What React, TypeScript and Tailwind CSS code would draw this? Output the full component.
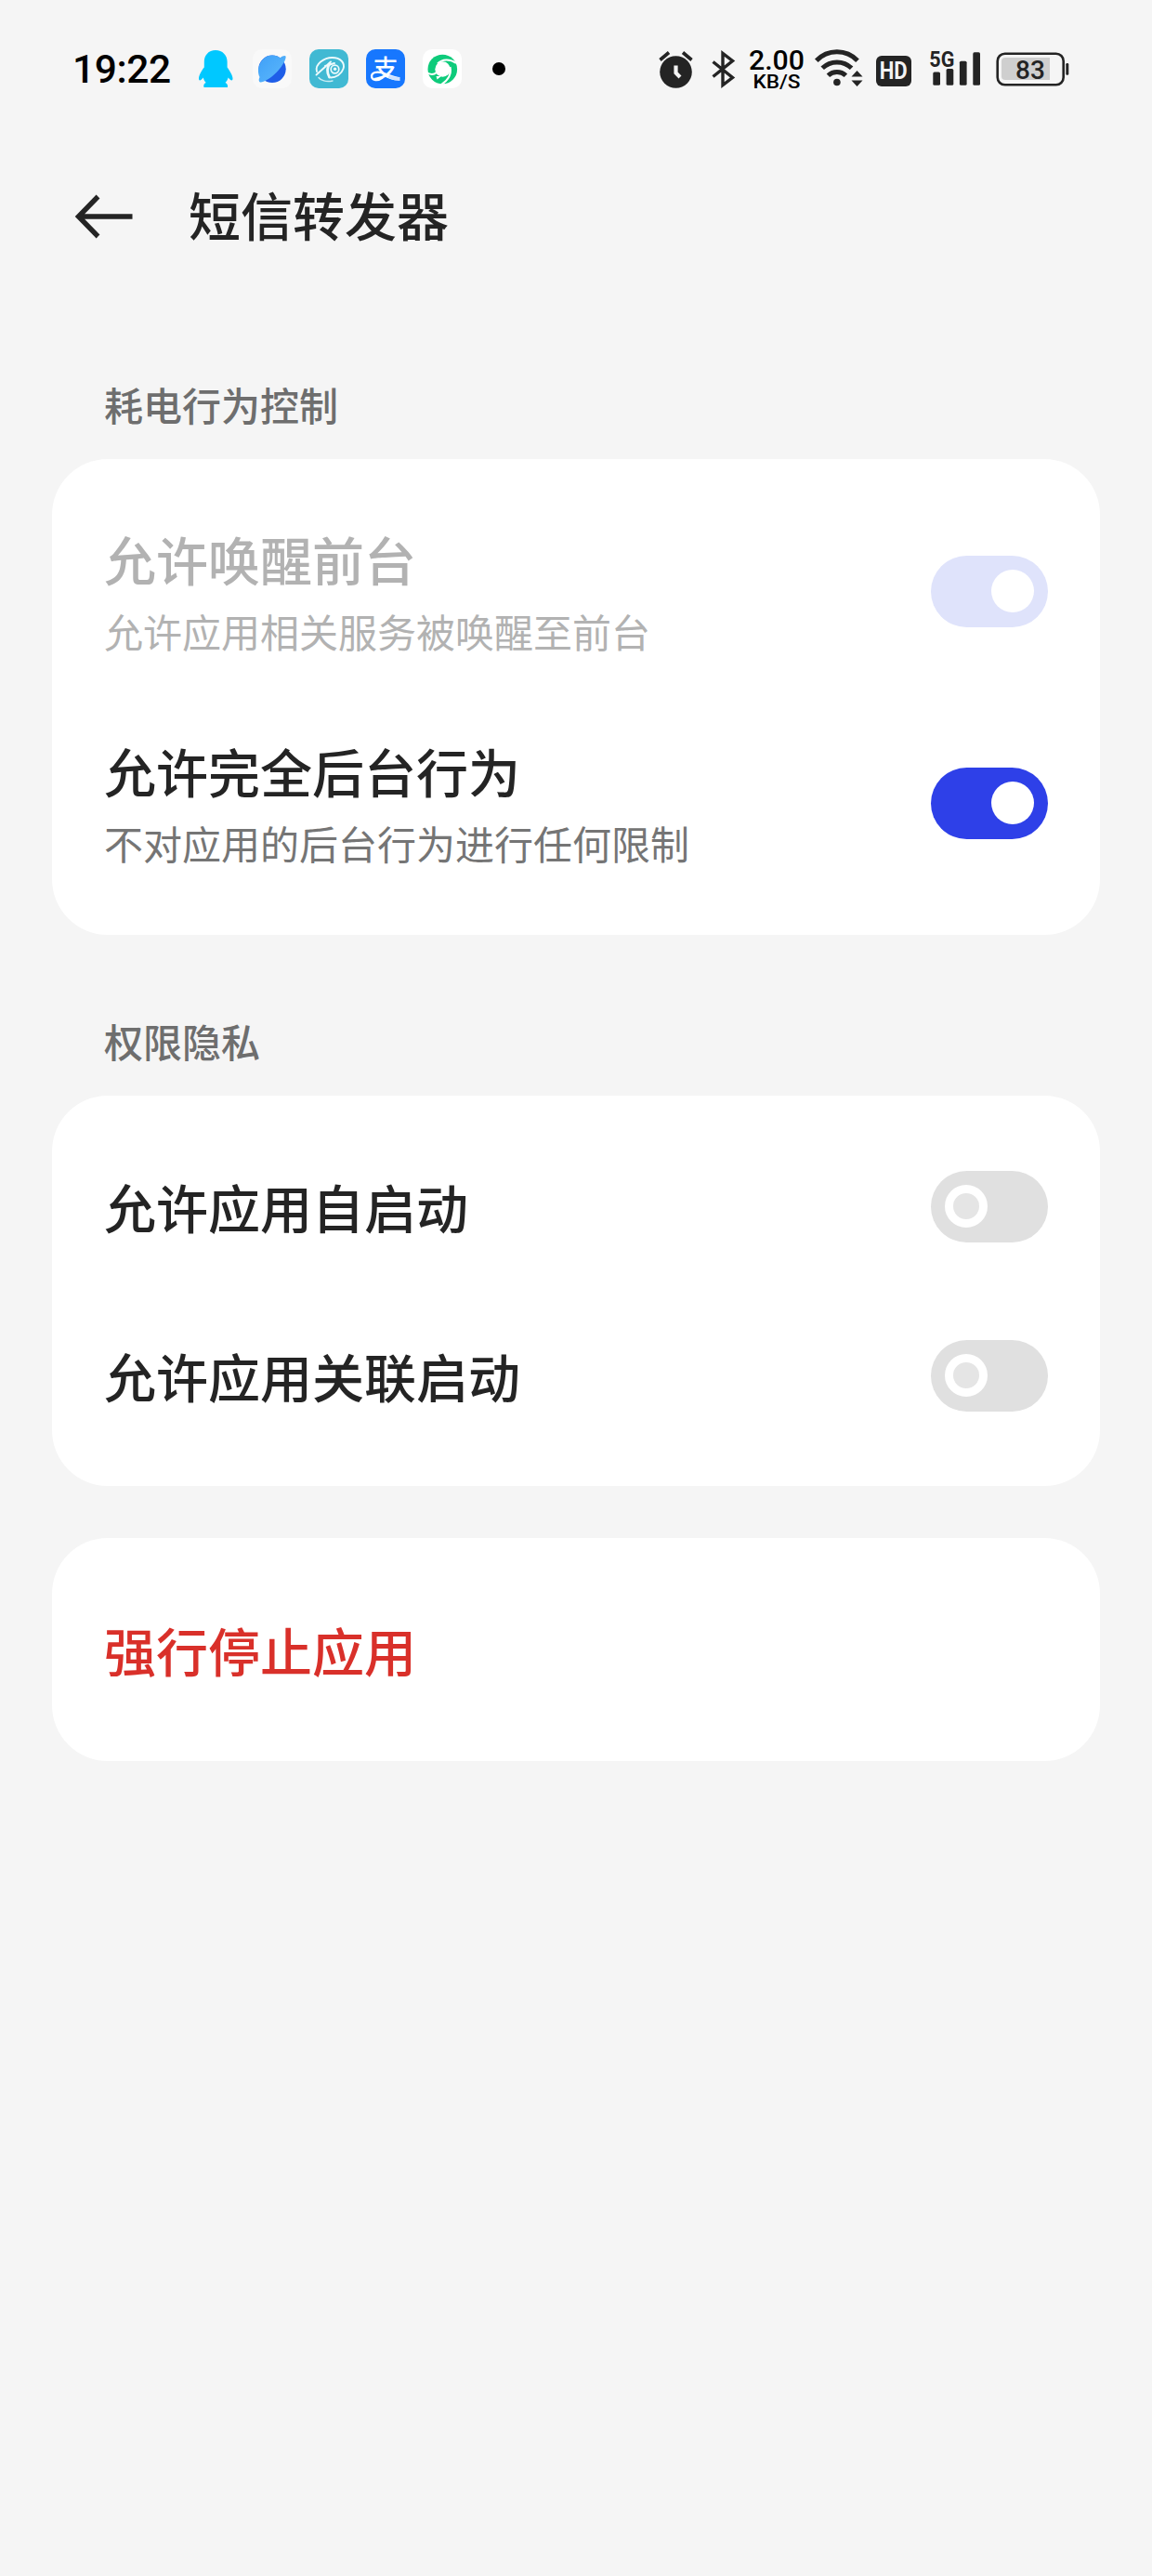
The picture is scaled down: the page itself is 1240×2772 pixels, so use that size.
import { useState } from "react";
import type { ReactNode } from "react";
import clsx from "clsx";

function AlarmIcon() {
  return (
    <svg width="38" height="42" viewBox="0 0 38 42" fill="none">
      <circle cx="18.5" cy="24.5" r="17.3" fill="#242424" />
      <path d="M1.5 11.5L11 3.5M35.5 11.5L26 3.5" stroke="#242424" strokeWidth="3.6" />
      <path d="M18.5 17.5V25.5L23 30" stroke="#f4f4f4" strokeWidth="4.2" />
    </svg>
  );
}

function BluetoothIcon() {
  return (
    <svg width="26" height="42" viewBox="0 0 26 42" fill="none">
      <path
        d="M1.5 13.5L22.5 30.5L12 38.5V4.5L22.5 12.5L1.5 29.5"
        stroke="#242424"
        strokeWidth="3.4"
      />
    </svg>
  );
}

function WifiIcon() {
  return (
    <svg width="54" height="42" viewBox="0 0 54 42" fill="none">
      <g stroke="#242424" strokeWidth="5">
        <path d="M2.8 12.3A30.5 30.5 0 0 1 47 12.3" />
        <path d="M9.2 20.3A22.5 22.5 0 0 1 40.6 20.3" />
        <path d="M15.4 28.3A13.8 13.8 0 0 1 34.4 28.3" />
      </g>
      <circle cx="24.9" cy="35.5" r="3.8" fill="#242424" />
      <path d="M37 34.5V29L46 18L54 29V34.5Z" fill="#f5f5f5" />
      <path d="M40.5 29.5L46.5 23L52.5 29.5ZM40.5 33.5H52.5L46.5 40Z" fill="#242424" />
    </svg>
  );
}

function SignalIcon() {
  return (
    <svg className="overflow-visible" width="56" height="42" viewBox="0 0 56 42">
      <text
        x="0.3"
        y="19.2"
        fontSize="24.5"
        fontWeight="700"
        fontFamily="Roboto"
        textLength="27"
        lengthAdjust="spacingAndGlyphs"
        fill="#242424"
      >
        5G
      </text>
      <g fill="#242424">
        <rect x="4.3" y="24.5" width="7.7" height="14.3" rx="1.6" />
        <rect x="18.6" y="21" width="7.7" height="17.8" rx="1.6" />
        <rect x="32.9" y="12.7" width="7.7" height="26.1" rx="1.6" />
        <rect x="47.3" y="3.3" width="7.7" height="35.5" rx="1.6" />
      </g>
    </svg>
  );
}

function BatteryIcon() {
  return (
    <svg width="80" height="42" viewBox="0 0 80 42">
      <rect x="1.7" y="4.7" width="71" height="33.6" rx="8" fill="none" stroke="#242424" strokeWidth="2.6" />
      <path d="M10 9H58V33H10Q6 33 6 29V13Q6 9 10 9Z" fill="#cfcfcf" />
      <rect x="75.3" y="15" width="3" height="12.8" rx="1.3" fill="#242424" />
      <text x="37" y="32" textAnchor="middle" fontSize="28" fontFamily="Roboto" fontWeight="500" fill="#242424">
        83
      </text>
    </svg>
  );
}

function PenguinIcon() {
  return (
    <svg width="42" height="42" viewBox="0 0 42 42" fill="#00c8ff">
      <path d="M21 1C28.5 1 33.6 6.5 33.6 13.5V19.5C35.5 22 39.5 28 39.5 31.5C39.5 35 36.5 33 34.6 30.5C34.2 32.5 33 34.500 31.5 36C33.5 37 34.5 38.5 34 41H8.5C7.8 38.5 8.5 37 10.7 36C9.2 34.5 8.2 32.5 7.8 30.5C6 33 3 35 3 31.5C3 28 6.5 22 8.8 19.5V13.5C8.8 6.5 13.5 1 21 1Z" />
    </svg>
  );
}

function PlanetIcon() {
  return (
    <svg width="42" height="42" viewBox="0 0 42 42">
      <defs>
        <linearGradient id="planet" x1="0" y1="0" x2="1" y2="1">
          <stop offset="0" stopColor="#3fa0f8" />
          <stop offset="1" stopColor="#5db9fb" />
        </linearGradient>
      </defs>
      <rect width="42" height="42" rx="10" fill="#f9f9f9" />
      <circle cx="21" cy="21.3" r="14.7" fill="#1f5ee8" />
      <path
        d="M29.5 9.3C32 7 35 6.3 35.5 7.5C37 12 25 30 11 35C7.5 36.5 5.5 34.5 7.5 30C3 20 10 6.6 21 6.6C24.5 6.6 27 7.5 29.5 9.3Z"
        fill="url(#planet)"
      />
    </svg>
  );
}

function EyeIcon() {
  return (
    <svg width="42" height="42" viewBox="0 0 42 42" fill="none">
      <rect width="42" height="42" rx="10" fill="#41b9d3" />
      <g stroke="#ecfafc" strokeLinecap="round">
        <path d="M8 24C5.5 16 16 9 24.5 9C34 9 38.5 15 36.5 21C34.5 27 28.5 30.5 23 30.5" strokeWidth="1.9" />
        <path d="M7.5 27.5L23 13.5M17 18L27 15" strokeWidth="1.9" />
        <path d="M10 30.5C12 33.5 18 35.5 25 34" strokeWidth="1.4" opacity="0.8" />
        <path d="M22 15.5C19 19 18.5 25 21.5 30" strokeWidth="2.8" />
        <circle cx="27.5" cy="21.5" r="4.3" strokeWidth="1.7" />
      </g>
      <circle cx="27.6" cy="21.3" r="1.7" fill="#ecfafc" />
    </svg>
  );
}

function PayIcon() {
  return (
    <svg width="42" height="42" viewBox="0 0 42 42" fill="none">
      <rect width="42" height="42" rx="10" fill="#1777fe" />
      <text
        x="21"
        y="31"
        textAnchor="middle"
        fontSize="27"
        fontWeight="500"
        fontFamily="Noto Sans CJK SC"
        fill="#fff"
      >
        支
      </text>
      <path
        d="M18 30.5C11 35.5 5.8 32.5 6 28.8C6.3 25 11.5 23.7 17 25.3C24 27.5 29 30.5 36 31.5"
        stroke="#fff"
        strokeWidth="2.2"
      />
      <path d="M25 28C29 29.3 32 29.8 36.5 30V34C31 34 27 32 23.5 30.5Z" fill="#cfe1ff" />
    </svg>
  );
}

function SwirlIcon() {
  return (
    <svg width="42" height="42" viewBox="0 0 42 42" fill="none">
      <rect width="42" height="42" rx="10" fill="#fff" />
      <circle cx="21.3" cy="21.5" r="15.8" fill="#0ecb7b" />
      <circle cx="21.5" cy="21.5" r="8.2" fill="#fff" />
      <path d="M14.5 29L15.5 32.5L20 29Z" fill="#fff" />
      <g stroke="#fff" strokeWidth="2">
        <path d="M16 15.5C21 10.5 29 10 36 15" />
        <path d="M29.5 19C31 26 28 33 20 38" />
        <path d="M15 25C12 27.5 8 27.5 4 25" />
      </g>
    </svg>
  );
}

function StatusBar() {
  return (
    <header className="flex h-[148px] items-center justify-between pl-[78px] pr-[88px] font-[Roboto]">
      <div className="flex items-center gap-[19px]">
        <span className="w-[114px] pt-[2px] text-[42.5px] leading-[50px] font-medium tracking-[-0.4px] text-black">
          19:22
        </span>
        <PenguinIcon />
        <PlanetIcon />
        <EyeIcon />
        <PayIcon />
        <SwirlIcon />
        <span className="flex w-[42px] justify-center">
          <span className="size-[14px] rounded-full bg-black" />
        </span>
      </div>

      <div className="flex items-center">
        <AlarmIcon />
        <span className="ml-[19px]">
          <BluetoothIcon />
        </span>
        <svg className="ml-[14px] overflow-visible" width="60" height="42" viewBox="0 0 60 42" fontWeight="500">
          <text x="30" y="22.3" textAnchor="middle" fontSize="29.5" textLength="60" lengthAdjust="spacingAndGlyphs">
            2.00
          </text>
          <text x="30" y="42" textAnchor="middle" fontSize="20.5" textLength="51" lengthAdjust="spacingAndGlyphs">
            KB/S
          </text>
        </svg>
        <span className="ml-[10px]">
          <WifiIcon />
        </span>
        <span className="mt-[5px] ml-[13px] flex h-[33px] w-[38px] items-center justify-center rounded-[6px] bg-[#242424] text-[26px] leading-[33px] font-bold text-[#f4f4f4]">
          <span className="scale-x-85">HD</span>
        </span>
        <span className="ml-[19px]">
          <SignalIcon />
        </span>
        <span className="ml-[16px]">
          <BatteryIcon />
        </span>
      </div>
    </header>
  );
}

function TitleBar() {
  return (
    <div className="flex h-[170px] items-center pl-[80px]">
      <button aria-label="返回">
        <svg width="64" height="50" viewBox="0 0 64 50" fill="none" stroke="#242424" strokeWidth="5.4">
          <path d="M62.5 25H5M25.5 3.5L4.5 25L25.5 46.5" />
        </svg>
      </button>
      <h1 className="mb-[6px] ml-[59px] text-[56px] leading-[80px] font-medium">短信转发器</h1>
    </div>
  );
}

interface SwitchProps {
  checked: boolean;
  disabled?: boolean;
  onChange: () => void;
}

function Switch({ checked, disabled, onChange }: SwitchProps) {
  return (
    <button
      role="switch"
      aria-checked={checked}
      disabled={disabled}
      onClick={onChange}
      className={clsx(
        "flex h-[77px] w-[126px] shrink-0 items-center rounded-full px-[15px]",
        checked ? "justify-end" : "justify-start bg-[#e0e0e0]",
        checked && (disabled ? "bg-[#dfe3fb]" : "bg-[#2e40e8]")
      )}
    >
      <span
        className={clsx(
          "size-[46px] rounded-full",
          checked ? "bg-white" : "border-[9px] border-white bg-[#e5e5e5]"
        )}
      />
    </button>
  );
}

interface SettingRowProps {
  title: string;
  summary?: string;
  disabled?: boolean;
  defaultChecked?: boolean;
}

function SettingRow({ title, summary, disabled, defaultChecked = false }: SettingRowProps) {
  const [checked, setChecked] = useState(defaultChecked);

  return (
    <div
      className={clsx(
        "flex items-center justify-between",
        summary ? "h-[228px]" : "h-[182px]",
        disabled && "text-[#b2b2b2]"
      )}
    >
      <div className={clsx(summary && "pt-[4px]")}>
        <p className="text-[56px] leading-[80px] font-medium">{title}</p>
        {summary && (
          <p className={clsx("text-[42px] leading-[75px]", !disabled && "text-[#757575]")}>{summary}</p>
        )}
      </div>
      <Switch checked={checked} disabled={disabled} onChange={() => setChecked(!checked)} />
    </div>
  );
}

function Card({ children }: { children: ReactNode }) {
  return <section className="rounded-[60px] bg-white px-[56px] py-[28px]">{children}</section>;
}

function SectionTitle({ children }: { children: ReactNode }) {
  return (
    <h2 className="flex h-[114px] items-center pb-[4px] pl-[56px] text-[42px] leading-[60px] font-medium text-[#6e6e6e]">
      {children}
    </h2>
  );
}

export default function App() {
  return (
    <div
      lang="zh-CN"
      className="min-h-[2772px] w-[1240px] bg-[#f5f5f5] font-['Noto_Sans_CJK_SC',sans-serif] text-[#242424]"
    >
      <StatusBar />
      <TitleBar />
      <main className="px-[56px] pt-[62px]">
        <SectionTitle>耗电行为控制</SectionTitle>
        <Card>
          <SettingRow title="允许唤醒前台" summary="允许应用相关服务被唤醒至前台" disabled defaultChecked />
          <SettingRow title="允许完全后台行为" summary="不对应用的后台行为进行任何限制" defaultChecked />
        </Card>
        <div className="mt-[59px]">
          <SectionTitle>权限隐私</SectionTitle>
          <Card>
            <SettingRow title="允许应用自启动" />
            <SettingRow title="允许应用关联启动" />
          </Card>
        </div>
        <div className="mt-[56px]">
          <Card>
            <button className="flex h-[184px] w-full items-center text-[56px] font-medium text-[#d9302a]">
              强行停止应用
            </button>
          </Card>
        </div>
      </main>
    </div>
  );
}
